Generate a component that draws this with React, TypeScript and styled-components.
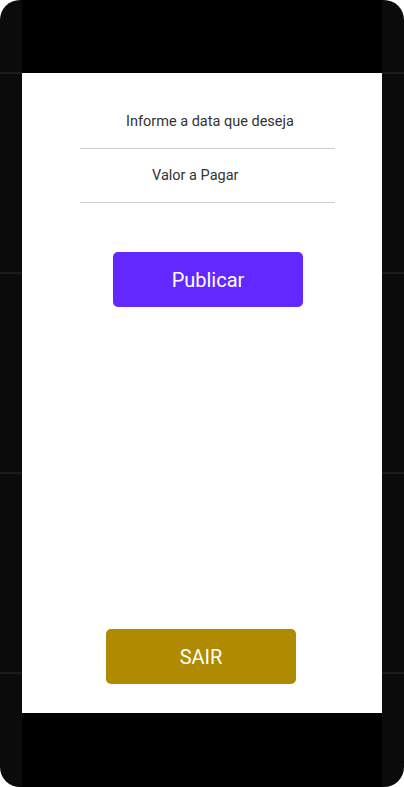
import React from "react";
import styled, { createGlobalStyle } from "styled-components";

const Global = createGlobalStyle`
  html, body { margin: 0; padding: 0; background: #ffffff; }
  body { font-family: Roboto, "Noto Sans", "Liberation Sans", sans-serif; }
  * { box-sizing: border-box; }
`;

const Frame = styled.div`
  width: 404px;
  height: 787px;
  border-radius: 20px;
  overflow: hidden;
  display: grid;
  grid-template-columns: 22px 1fr 22px;
  background-color: #0b0b0b;
`;

const Rail = styled.div`
  background: repeating-linear-gradient(
    to bottom,
    transparent 0px,
    transparent 72px,
    #1c1c1c 72px,
    #1c1c1c 74px,
    transparent 74px,
    transparent 200px
  );
`;

const Column = styled.div`
  display: flex;
  flex-direction: column;
  background: #000000;
`;

const Bezel = styled.div<{ $h: number }>`
  height: ${(p) => p.$h}px;
  flex: none;
  background: #000000;
`;

const Screen = styled.main`
  flex: 1;
  background: #ffffff;
  display: flex;
  flex-direction: column;
  padding-top: 22px;
  padding-bottom: 29px;
`;

const Form = styled.div`
  display: flex;
  flex-direction: column;
  width: 255px;
  margin-left: 58px;
`;

const Field = styled.input<{ $indent: number }>`
  height: 54px;
  border: none;
  border-bottom: 1px solid #cccccc;
  outline: none;
  background: transparent;
  padding: 0 0 0 ${(p) => p.$indent}px;
  font-family: Roboto, "Noto Sans", "Liberation Sans", sans-serif;
  font-size: 14.5px;
  color: #333333;
  &::placeholder {
    color: #333333;
    opacity: 1;
  }
`;

const Button = styled.button<{ $bg: string; $offset: number; $size: number }>`
  width: 190px;
  height: 55px;
  margin-left: ${(p) => p.$offset}px;
  border: none;
  border-radius: 5px;
  background: ${(p) => p.$bg};
  color: #ffffff;
  font-family: Roboto, "Noto Sans", "Liberation Sans", sans-serif;
  font-size: ${(p) => p.$size}px;
  font-weight: 400;
  cursor: pointer;
`;

const PublishButton = styled(Button)`
  margin-top: 49px;
`;

const ExitButton = styled(Button)`
  margin-top: auto;
`;

export default function App() {
  return (
    <>
      <Global />
      <Frame>
        <Rail />
        <Column>
          <Bezel $h={73} />
          <Screen>
            <Form>
              <Field $indent={46} placeholder="Informe a data que deseja" />
              <Field $indent={72} placeholder="Valor a Pagar" />
            </Form>
            <PublishButton $bg="#6228fe" $offset={91} $size={20}>
              Publicar
            </PublishButton>
            <ExitButton $bg="#b08a00" $offset={84} $size={20}>
              SAIR
            </ExitButton>
          </Screen>
          <Bezel $h={74} />
        </Column>
        <Rail />
      </Frame>
    </>
  );
}
